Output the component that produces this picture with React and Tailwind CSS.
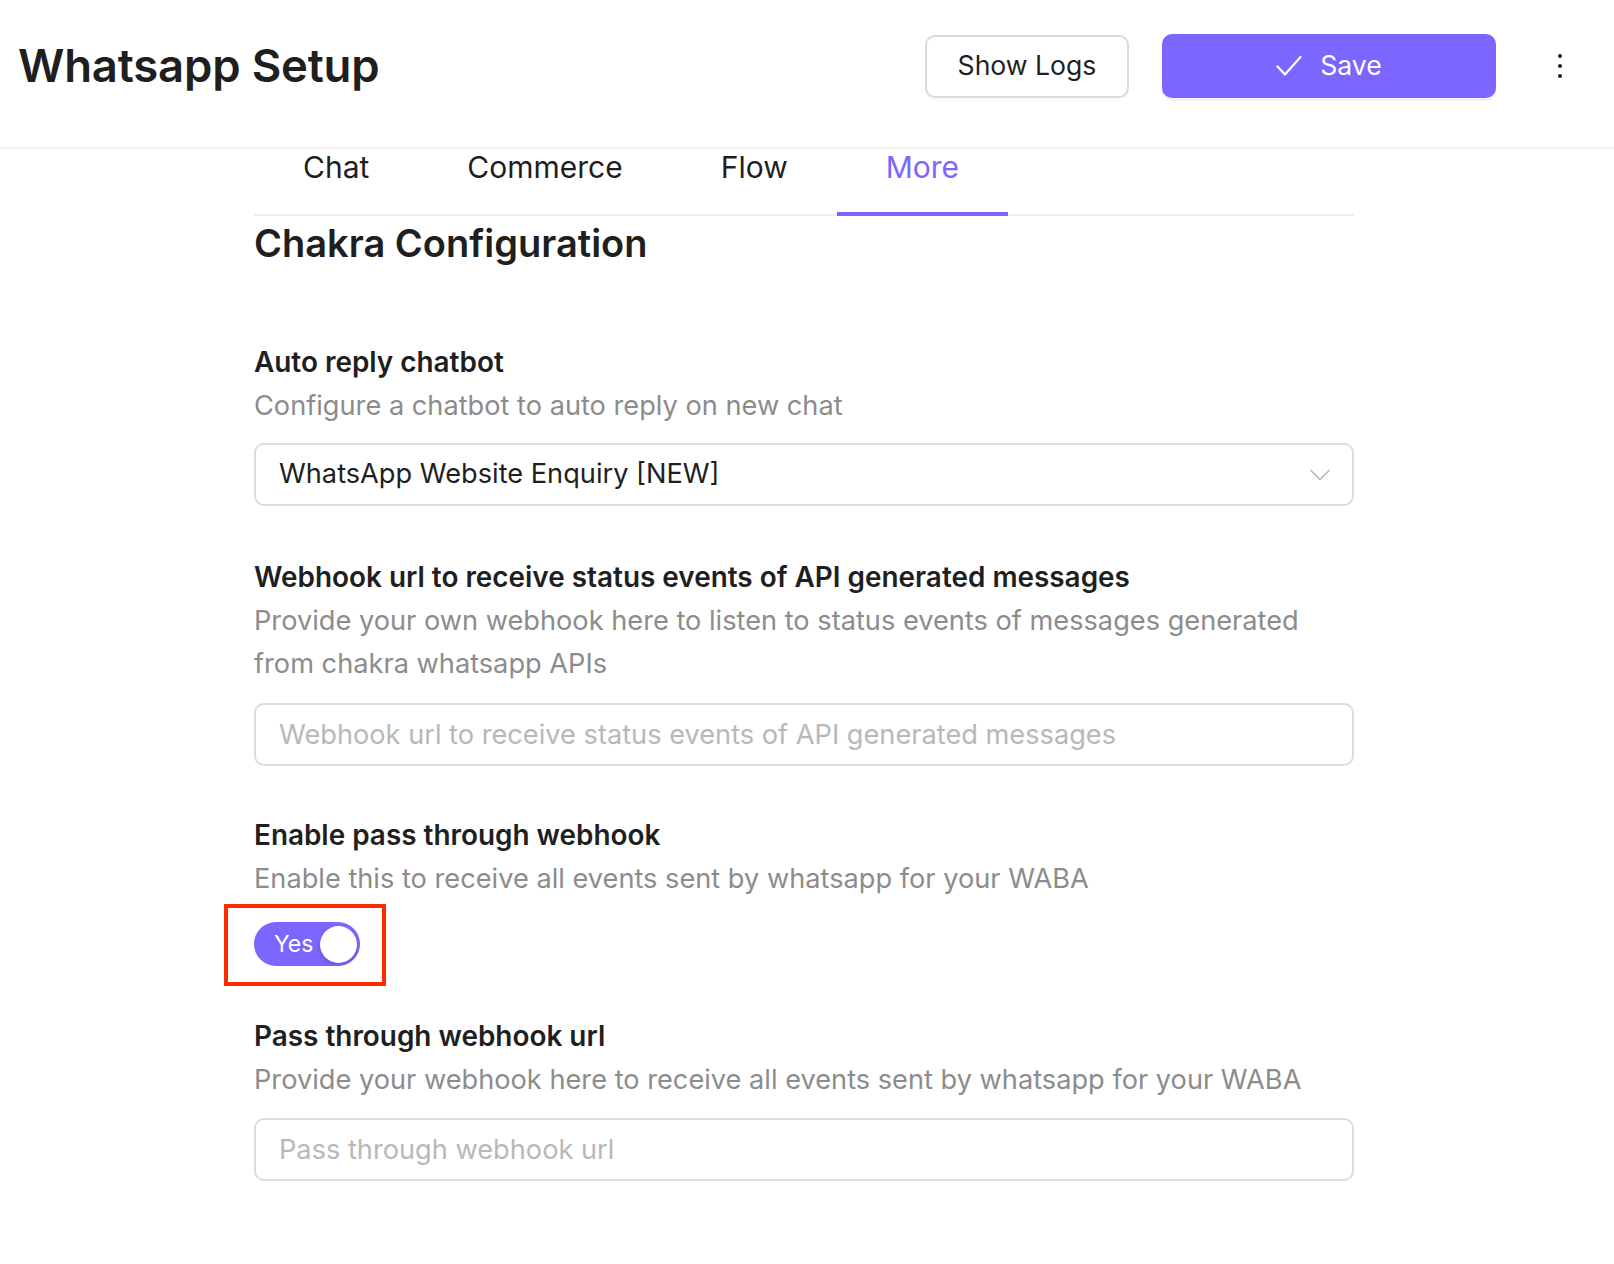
import { useState } from "react";

const tabs = ["Chat", "Commerce", "Flow", "More"];

function Field({ label, desc, children, className = "" }) {
  return (
    <div className={className}>
      <div className="text-[27.9px] leading-[36px] font-semibold text-[#1f1f1f]">{label}</div>
      <div className="mt-[4px] text-[27.2px] leading-[43px] text-[#8c8c8c]">{desc}</div>
      {children}
    </div>
  );
}

export default function App() {
  const [active, setActive] = useState("More");
  const [passThrough, setPassThrough] = useState(true);

  return (
    <div className="min-h-screen bg-white text-[#1f1f1f]" style={{ fontFamily: "Inter, 'Noto Sans', sans-serif" }}>
      {/* Header */}
      <header className="h-[149px] border-b-2 border-[#f0f0f0] pl-[18px] pr-[34px] pt-[34px]">
        <div className="flex items-center justify-between h-[64px]">
          <h1 className="text-[45.5px] font-semibold tracking-[-0.2px]">Whatsapp Setup</h1>
          <div className="flex items-center">
            <button className="w-[204px] h-[63px] rounded-[10px] border-2 border-[#d9d9d9] bg-white text-[26.6px] text-[#1f1f1f] shadow-[0_3px_0_rgba(0,0,0,0.02)]">
              Show Logs
            </button>
            <button className="ml-[33px] w-[334px] h-[64px] rounded-[10px] bg-[#7b66ff] text-white text-[26.6px] flex items-center justify-center gap-[18px] shadow-[0_3px_0_rgba(123,102,255,0.1)]">
              <svg width="26" height="22" viewBox="0 0 26 22" fill="none">
                <path d="M1.5 11.5L9 19.5L24.5 2" stroke="white" strokeWidth="2.2" strokeLinecap="round" strokeLinejoin="round" />
              </svg>
              Save
            </button>
            <button className="ml-[44px] w-[40px] h-[40px] flex flex-col items-center justify-center gap-[6px]">
              <span className="w-[4px] h-[4px] rounded-full bg-[#1f1f1f]" />
              <span className="w-[4px] h-[4px] rounded-full bg-[#1f1f1f]" />
              <span className="w-[4px] h-[4px] rounded-full bg-[#1f1f1f]" />
            </button>
          </div>
        </div>
      </header>

      <main className="ml-[254px] w-[1100px] pb-[80px]">
        {/* Tabs */}
        <div className="flex border-b-2 border-[#f0f0f0]">
          {tabs.map((t) => (
            <button
              key={t}
              onClick={() => setActive(t)}
              className={
                "relative h-[65px] px-[49px] text-[30px] leading-[36px] pb-[29px] " +
                (active === t ? "text-[#7b66ff]" : "text-[#1f1f1f]")
              }
            >
              {t}
              {active === t && <span className="absolute left-0 right-0 -bottom-[2px] h-[4px] bg-[#7b66ff]" />}
            </button>
          ))}
        </div>

        <h2 className="mt-[4px] text-[38px] leading-[46px] font-semibold">Chakra Configuration</h2>

        <Field className="mt-[78px]" label="Auto reply chatbot" desc="Configure a chatbot to auto reply on new chat">
          <div className="mt-[16px] h-[63px] rounded-[10px] border-2 border-[#dcdcdc] flex items-center justify-between pl-[23px] pr-[22px]">
            <span className="text-[27.2px] text-[#1f1f1f]">WhatsApp Website Enquiry [NEW]</span>
            <svg width="20" height="12" viewBox="0 0 20 12" fill="none">
              <path d="M1 1.5L10 10.5L19 1.5" stroke="#b5b5b5" strokeWidth="1.5" strokeLinecap="round" strokeLinejoin="round" />
            </svg>
          </div>
        </Field>

        <Field
          className="mt-[53px]"
          label="Webhook url to receive status events of API generated messages"
          desc={<>Provide your own webhook here to listen to status events of messages generated<br />from chakra whatsapp APIs</>}
        >
          <input
            placeholder="Webhook url to receive status events of API generated messages"
            className="mt-[18px] w-full h-[63px] rounded-[10px] border-2 border-[#dcdcdc] px-[23px] text-[27.2px] outline-none placeholder:text-[#b8b8b8]"
          />
        </Field>

        <Field
          className="mt-[51px]"
          label="Enable pass through webhook"
          desc="Enable this to receive all events sent by whatsapp for your WABA"
        >
          <div className="relative mt-[22px] w-[106px] h-[44px]">
            <button
              onClick={() => setPassThrough(!passThrough)}
              className={
                "w-[106px] h-[44px] rounded-full flex items-center px-[3px] " +
                (passThrough ? "bg-[#7b66ff] justify-end" : "bg-[#cfcfcf] justify-start")
              }
            >
              {passThrough && <span className="mr-auto ml-[17px] text-[23px] text-white">Yes</span>}
              <span className="w-[37px] h-[37px] rounded-full bg-white shadow-[0_2px_4px_rgba(0,0,0,0.2)]" />
            </button>
            <div className="absolute left-[-30px] top-[-18px] w-[162px] h-[82px] border-[4px] border-[#ff2a00] pointer-events-none" />
          </div>
        </Field>

        <Field
          className="mt-[52px]"
          label="Pass through webhook url"
          desc="Provide your webhook here to receive all events sent by whatsapp for your WABA"
        >
          <input
            placeholder="Pass through webhook url"
            className="mt-[17px] w-full h-[63px] rounded-[10px] border-2 border-[#dcdcdc] px-[23px] text-[27.2px] outline-none placeholder:text-[#b8b8b8]"
          />
        </Field>
      </main>
    </div>
  );
}
